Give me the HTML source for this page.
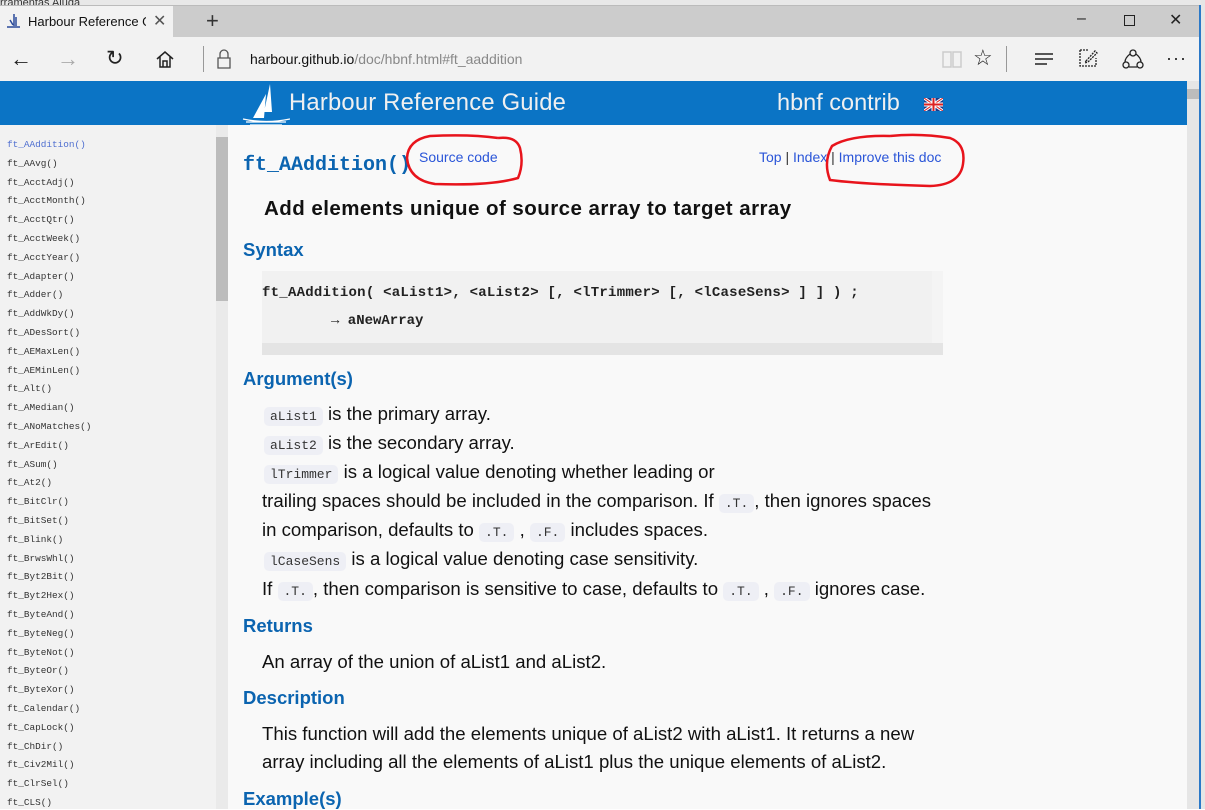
<!DOCTYPE html>
<html><head><meta charset="utf-8"><style>
*{margin:0;padding:0;box-sizing:border-box}
body{width:1205px;height:809px;overflow:hidden;position:relative;background:#fff;font-family:"Liberation Sans",sans-serif}
.a{position:absolute;white-space:nowrap}
.side div{position:absolute;left:7px;font:9.4px "Liberation Mono",monospace;color:#333}
.t{position:absolute;left:262px;font-size:18.6px;color:#111;white-space:nowrap}
.c{font:13px "Liberation Mono",monospace;background:#eeeff5;border-radius:5px;padding:2px 6px;color:#333;letter-spacing:0}
.h{position:absolute;left:243px;color:#0b64b0;font-weight:bold;font-size:18.5px}
</style></head><body>
<!-- title bar -->
<div class="a" style="left:0;top:0;width:1205px;height:6px;background:#e8e8e8;font-size:11px;line-height:6px;overflow:hidden;color:#333">rramentas Ajuda</div>
<div class="a" style="left:0;top:5px;width:1200px;height:32px;background:#cccccc;border-top:1px solid #bbb"></div>
<div class="a" style="left:0;top:6px;width:173px;height:31px;background:#f2f2f2"></div>
<svg class="a" style="left:6px;top:13px" width="14" height="16"><path d="M8 1 L8 13 M10 4 L10 13 M4 7 L7 12 M1 14 L14 14" stroke="#2a4a9a" stroke-width="1.5" fill="none"/></svg>
<div class="a" style="left:28px;top:14px;font-size:13px;color:#111;width:118px;overflow:hidden">Harbour Reference Guic</div>
<div class="a" style="left:153px;top:11px;font-size:16px;color:#555">✕</div>
<div class="a" style="left:206px;top:8px;font-size:22px;color:#333">+</div>
<div class="a" style="left:1077px;top:10px;font-size:16px;color:#222">–</div>
<div class="a" style="left:1124px;top:15px;width:11px;height:11px;border:1px solid #222"></div>
<div class="a" style="left:1169px;top:10px;font-size:16px;color:#222">✕</div>
<!-- nav bar -->
<div class="a" style="left:0;top:37px;width:1200px;height:44px;background:#f2f2f2"></div>
<div class="a" style="left:10px;top:46px;font-size:22px;color:#222">←</div>
<div class="a" style="left:57px;top:46px;font-size:22px;color:#aaa">→</div>
<div class="a" style="left:106px;top:46px;font-size:21px;color:#222">↻</div>
<svg class="a" style="left:155px;top:50px" width="20" height="18"><path d="M2 9 L10 2 L18 9 M5 7 L5 17 L15 17 L15 7 M8 17 L8 11 L12 11 L12 17" stroke="#222" stroke-width="1.5" fill="none"/></svg>
<div class="a" style="left:203px;top:46px;width:1px;height:26px;background:#999"></div>
<svg class="a" style="left:216px;top:49px" width="16" height="20"><path d="M4 9 V5 A4 4 0 0 1 12 5 V9 M2 9 H14 V19 H2 Z" stroke="#555" stroke-width="1.3" fill="none"/></svg>
<div class="a" style="left:250px;top:51px;font-size:14px;color:#111">harbour.github.io<span style="color:#888">/doc/hbnf.html#ft_aaddition</span></div>
<svg class="a" style="left:942px;top:50px" width="20" height="18"><path d="M1 2 H9 V17 H1 Z M11 2 H19 V17 H11 Z" stroke="#ccc" stroke-width="1.5" fill="none"/></svg>
<div class="a" style="left:973px;top:45px;font-size:22px;color:#222">☆</div>
<div class="a" style="left:1006px;top:46px;width:1px;height:26px;background:#999"></div>
<svg class="a" style="left:1035px;top:52px" width="20" height="14"><path d="M0 2 H18 M0 7 H18 M0 12 H12" stroke="#222" stroke-width="1.4"/></svg>
<svg class="a" style="left:1078px;top:48px" width="20" height="20"><path d="M2 2 H10 M2 2 V18 H18 V10 M8 13 L17 3 L19 5 L10 14 L7 15 Z" stroke="#222" stroke-width="1.3" fill="none" stroke-dasharray="2 1"/></svg>
<svg class="a" style="left:1122px;top:48px" width="22" height="22"><circle cx="11" cy="5" r="3" stroke="#222" fill="none" stroke-width="1.3"/><circle cx="4" cy="17" r="3" stroke="#222" fill="none" stroke-width="1.3"/><circle cx="18" cy="17" r="3" stroke="#222" fill="none" stroke-width="1.3"/><path d="M8 6 Q3 10 3 14 M14 6 Q19 10 19 14 M7 19 H15" stroke="#222" fill="none" stroke-width="1.3"/></svg>
<div class="a" style="left:1166px;top:48px;font-size:18px;color:#222;letter-spacing:1px">···</div>
<div class="a" style="left:1199px;top:5px;width:2px;height:804px;background:#2b79c8"></div>
<div class="a" style="left:1201px;top:0;width:4px;height:809px;background:#e6e6e6"></div>
<!-- header -->
<div class="a" style="left:0;top:81px;width:1187px;height:44px;background:#0b74c5"></div>
<svg class="a" style="left:242px;top:82px" width="48" height="44"><path d="M28 2 L22 30 L30 30 Z M24 12 L11 36 L22 36 Z" fill="#fff"/><path d="M1 37 Q24 42 48 37 M4 40 H44 M8 43 H40" stroke="#fff" stroke-width="1.3" fill="none"/></svg>
<div class="a" style="left:289px;top:89px;font-size:23.8px;color:#f0f0f0;letter-spacing:0.2px">Harbour Reference Guide</div>
<div class="a" style="left:777px;top:89px;font-size:23.5px;color:#f0f0f0">hbnf contrib</div>
<svg class="a" style="left:924px;top:98px" width="19" height="13"><rect width="19" height="13" fill="#1a3a8a"/><path d="M0 0 L19 13 M19 0 L0 13" stroke="#fff" stroke-width="3"/><path d="M0 0 L19 13 M19 0 L0 13" stroke="#d22" stroke-width="1"/><path d="M9.5 0 V13 M0 6.5 H19" stroke="#fff" stroke-width="4"/><path d="M9.5 0 V13 M0 6.5 H19" stroke="#d22" stroke-width="2"/></svg>
<!-- page scrollbar -->
<div class="a" style="left:1187px;top:81px;width:12px;height:728px;background:#e6e6e6"></div>
<div class="a" style="left:1187px;top:89px;width:12px;height:10px;background:#bcbcbc"></div>
<!-- sidebar -->
<div class="a" style="left:0;top:125px;width:216px;height:684px;background:#f2f2f2"></div>
<div class="a" style="left:216px;top:125px;width:12px;height:684px;background:#eaeaea"></div>
<div class="a" style="left:216px;top:137px;width:12px;height:164px;background:#bcbcbc"></div>
<div class="side">
<div style="top:139px;color:#4f6fd0">ft_AAddition()</div>
<div style="top:158px">ft_AAvg()</div>
<div style="top:177px">ft_AcctAdj()</div>
<div style="top:195px">ft_AcctMonth()</div>
<div style="top:214px">ft_AcctQtr()</div>
<div style="top:233px">ft_AcctWeek()</div>
<div style="top:252px">ft_AcctYear()</div>
<div style="top:271px">ft_Adapter()</div>
<div style="top:289px">ft_Adder()</div>
<div style="top:308px">ft_AddWkDy()</div>
<div style="top:327px">ft_ADesSort()</div>
<div style="top:346px">ft_AEMaxLen()</div>
<div style="top:365px">ft_AEMinLen()</div>
<div style="top:383px">ft_Alt()</div>
<div style="top:402px">ft_AMedian()</div>
<div style="top:421px">ft_ANoMatches()</div>
<div style="top:440px">ft_ArEdit()</div>
<div style="top:459px">ft_ASum()</div>
<div style="top:477px">ft_At2()</div>
<div style="top:496px">ft_BitClr()</div>
<div style="top:515px">ft_BitSet()</div>
<div style="top:534px">ft_Blink()</div>
<div style="top:553px">ft_BrwsWhl()</div>
<div style="top:571px">ft_Byt2Bit()</div>
<div style="top:590px">ft_Byt2Hex()</div>
<div style="top:609px">ft_ByteAnd()</div>
<div style="top:628px">ft_ByteNeg()</div>
<div style="top:647px">ft_ByteNot()</div>
<div style="top:665px">ft_ByteOr()</div>
<div style="top:684px">ft_ByteXor()</div>
<div style="top:703px">ft_Calendar()</div>
<div style="top:722px">ft_CapLock()</div>
<div style="top:741px">ft_ChDir()</div>
<div style="top:759px">ft_Civ2Mil()</div>
<div style="top:778px">ft_ClrSel()</div>
<div style="top:797px">ft_CLS()</div>
</div>
<!-- content -->
<div class="a" style="left:228px;top:125px;width:959px;height:684px;background:#f9f9f9"></div>
<div class="a" style="left:243px;top:154px;font:bold 20px 'Liberation Mono',monospace;color:#0b64b0">ft_AAddition()</div>
<div class="a" style="left:419px;top:149px;font-size:14px;color:#2a55d8">Source code</div>
<div class="a" style="left:759px;top:149px;font-size:14px;color:#2a55d8">Top <span style="color:#333">|</span> Index <span style="color:#333">|</span> Improve this doc</div>
<svg class="a" style="left:400px;top:130px" width="570" height="60"><path d="M98 8 Q70 4 30 6 Q8 10 7 28 Q9 50 35 54 Q90 56 118 48 Q124 34 120 18 Q116 6 98 8" stroke="#e8141c" stroke-width="2.5" fill="none"/><path d="M490 6 Q520 3 550 8 Q566 14 563 34 Q560 55 530 56 Q460 54 430 50 Q423 32 432 16 Q450 5 490 6" stroke="#e8141c" stroke-width="2.5" fill="none"/></svg>
<div class="a" style="left:264px;top:197px;font-size:20.5px;font-weight:bold;color:#111;letter-spacing:0.45px">Add elements unique of source array to target array</div>
<div class="h" style="top:239px">Syntax</div>
<div class="a" style="left:262px;top:271px;width:681px;height:84px;background:#f1f1f1"></div>
<div class="a" style="left:932px;top:271px;width:11px;height:73px;background:#f4f4f4"></div>
<div class="a" style="left:262px;top:343px;width:681px;height:12px;background:#e4e4e4"></div>
<div class="a" style="left:262px;top:285px;font:bold 14px 'Liberation Mono',monospace;color:#222;letter-spacing:0.25px">ft_AAddition( &lt;aList1&gt;, &lt;aList2&gt; [, &lt;lTrimmer&gt; [, &lt;lCaseSens&gt; ] ] ) ;</div>
<div class="a" style="left:331px;top:313px;font:bold 14px 'Liberation Mono',monospace;color:#222">→ aNewArray</div>
<div class="h" style="top:368px">Argument(s)</div>
<div class="t" style="top:403px;left:264px"><span class="c">aList1</span> is the primary array.</div>
<div class="t" style="top:432px;left:264px"><span class="c">aList2</span> is the secondary array.</div>
<div class="t" style="top:461px;left:264px"><span class="c">lTrimmer</span> is a logical value denoting whether leading or</div>
<div class="t" style="top:490px">trailing spaces should be included in the comparison. If <span class="c">.T.</span>, then ignores spaces</div>
<div class="t" style="top:519px">in comparison, defaults to <span class="c">.T.</span> , <span class="c">.F.</span> includes spaces.</div>
<div class="t" style="top:548px;left:264px"><span class="c">lCaseSens</span> is a logical value denoting case sensitivity.</div>
<div class="t" style="top:578px">If <span class="c">.T.</span>, then comparison is sensitive to case, defaults to <span class="c">.T.</span> , <span class="c">.F.</span> ignores case.</div>
<div class="h" style="top:615px">Returns</div>
<div class="t" style="top:651px">An array of the union of aList1 and aList2.</div>
<div class="h" style="top:687px">Description</div>
<div class="t" style="top:723px">This function will add the elements unique of aList2 with aList1. It returns a new</div>
<div class="t" style="top:751px">array including all the elements of aList1 plus the unique elements of aList2.</div>
<div class="h" style="top:788px">Example(s)</div>
</body></html>
